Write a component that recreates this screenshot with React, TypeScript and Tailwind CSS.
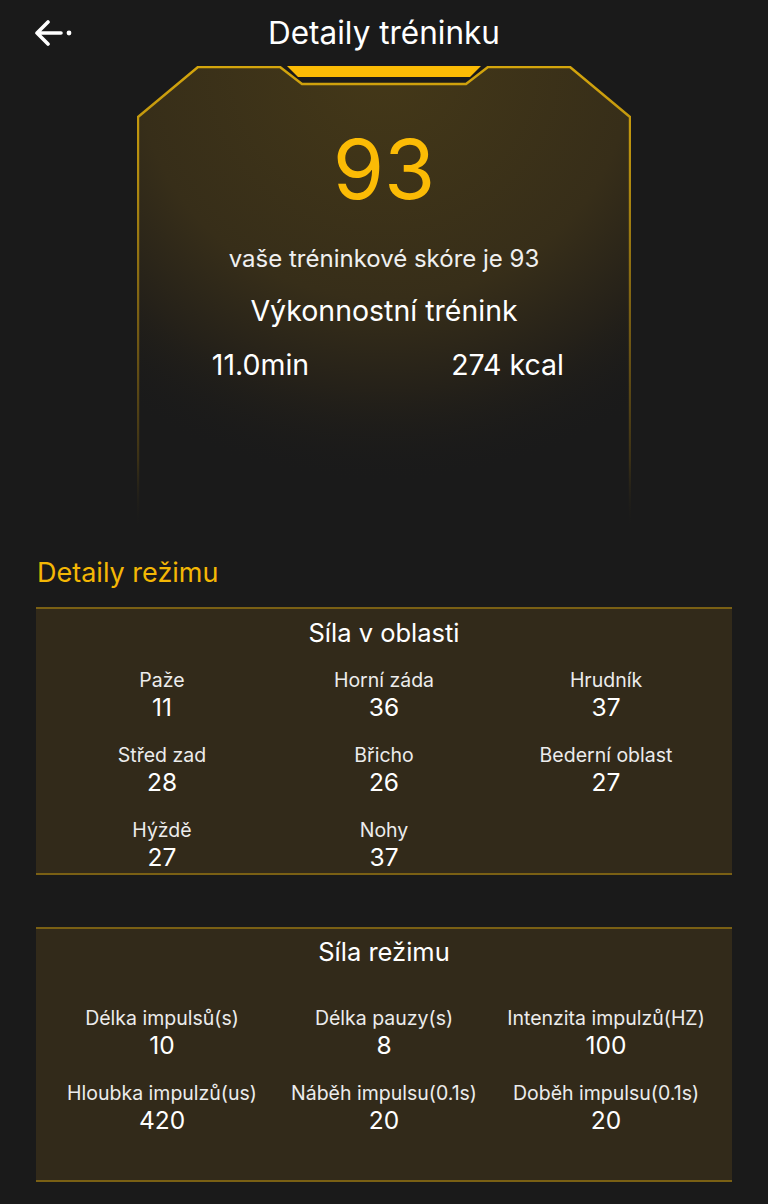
import React from "react";

type Stat = { label: string; value: string };

const areaStats: Stat[] = [
  { label: "Paže", value: "11" },
  { label: "Horní záda", value: "36" },
  { label: "Hrudník", value: "37" },
  { label: "Střed zad", value: "28" },
  { label: "Břicho", value: "26" },
  { label: "Bederní oblast", value: "27" },
  { label: "Hýždě", value: "27" },
  { label: "Nohy", value: "37" },
];

const modeStats: Stat[] = [
  { label: "Délka impulsů(s)", value: "10" },
  { label: "Délka pauzy(s)", value: "8" },
  { label: "Intenzita impulzů(HZ)", value: "100" },
  { label: "Hloubka impulzů(us)", value: "420" },
  { label: "Náběh impulsu(0.1s)", value: "20" },
  { label: "Doběh impulsu(0.1s)", value: "20" },
];

function BackArrow() {
  return (
    <svg width="40" height="26" viewBox="0 0 40 26" fill="none">
      <path
        d="M13 2 L2 13 L13 24 M2 13 H26"
        stroke="white"
        strokeWidth="3.6"
        strokeLinecap="round"
        strokeLinejoin="round"
      />
      <circle cx="34" cy="13" r="2.4" fill="white" />
    </svg>
  );
}

function CardFrame() {
  return (
    <svg
      className="absolute inset-0"
      width="494"
      height="464"
      viewBox="0 0 494 464"
      fill="none"
    >
      <defs>
        <radialGradient id="cardFill" cx="50%" cy="0%" r="100%">
          <stop offset="0%" stopColor="#443818" />
          <stop offset="50%" stopColor="#372e19" />
          <stop offset="70%" stopColor="#252119" />
          <stop offset="90%" stopColor="#1a1a1a" stopOpacity="0" />
        </radialGradient>
        <linearGradient id="cardStroke" x1="0" y1="0" x2="0" y2="464" gradientUnits="userSpaceOnUse">
          <stop offset="0%" stopColor="#d4a50c" />
          <stop offset="25%" stopColor="#b08a10" />
          <stop offset="60%" stopColor="#6e5614" />
          <stop offset="85%" stopColor="#3a3016" />
          <stop offset="100%" stopColor="#1a1a1a" stopOpacity="0" />
        </linearGradient>
      </defs>
      <path
        d="M1 464 V51 L61 1 H143 L165 18 H329 L351 1 H433 L493 51 V464 Z"
        fill="url(#cardFill)"
      />
      <path
        d="M1 464 V51 L61 1 H143 L165 18 H329 L351 1 H433 L493 51 V464"
        stroke="url(#cardStroke)"
        strokeWidth="2.4"
        strokeLinejoin="round"
      />
      <path d="M150 0 H344 L333 11 H161 Z" fill="#fbbb05" />
    </svg>
  );
}

function StatGrid({ stats }: { stats: Stat[] }) {
  return (
    <div className="grid grid-cols-3 gap-y-[21px] px-[15px]">
      {stats.map((s) => (
        <div key={s.label} className="flex flex-col items-center">
          <span className="text-[19.5px] leading-[24px] text-[#ececec] whitespace-nowrap">{s.label}</span>
          <span className="text-[24.5px] leading-[30px] text-white">{s.value}</span>
        </div>
      ))}
    </div>
  );
}

export default function App() {
  return (
    <div className="min-h-screen bg-[#1a1a1a] text-white font-['Inter',sans-serif]">
      <header className="relative flex h-[66px] items-center justify-center">
        <button className="absolute left-[35px] top-[20px]">
          <BackArrow />
        </button>
        <h1 className="text-[31.5px] leading-[38px] text-white">Detaily tréninku</h1>
      </header>

      <section className="relative mx-auto h-[464px] w-[494px]">
        <CardFrame />
        <div className="relative flex flex-col items-center pt-[62px]">
          <div className="text-[83px] leading-[82px] text-[#fbbb05]">93</div>
          <div className="mt-[34px] text-[24px] leading-[30px] text-[#f0f0f0]">
            vaše tréninkové skóre je 93
          </div>
          <div className="mt-[19px] text-[28.5px] leading-[36px]">Výkonnostní trénink</div>
          <div className="mt-[18px] flex w-full justify-center text-[28.5px] leading-[36px]">
            <span className="w-[250px] text-center">11.0min</span>
            <span className="w-[250px] text-center">274 kcal</span>
          </div>
        </div>
      </section>

      <h2 className="mt-[26px] px-[37px] text-[27px] leading-[34px] text-[#f4b705]">Detaily režimu</h2>

      <div className="mx-[36px] mt-[17px] border-y-2 border-[#7a6014] bg-[#322a1a] pt-[8px] pb-[1px]">
        <h3 className="mb-[19px] text-center text-[25.5px] leading-[32px]">Síla v oblasti</h3>
        <StatGrid stats={areaStats} />
      </div>

      <div className="mx-[36px] mt-[52px] border-y-2 border-[#7a6014] bg-[#322a1a] pt-[7px] pb-[45px]">
        <h3 className="mb-[38px] text-center text-[25.5px] leading-[32px]">Síla režimu</h3>
        <StatGrid stats={modeStats} />
      </div>
    </div>
  );
}
